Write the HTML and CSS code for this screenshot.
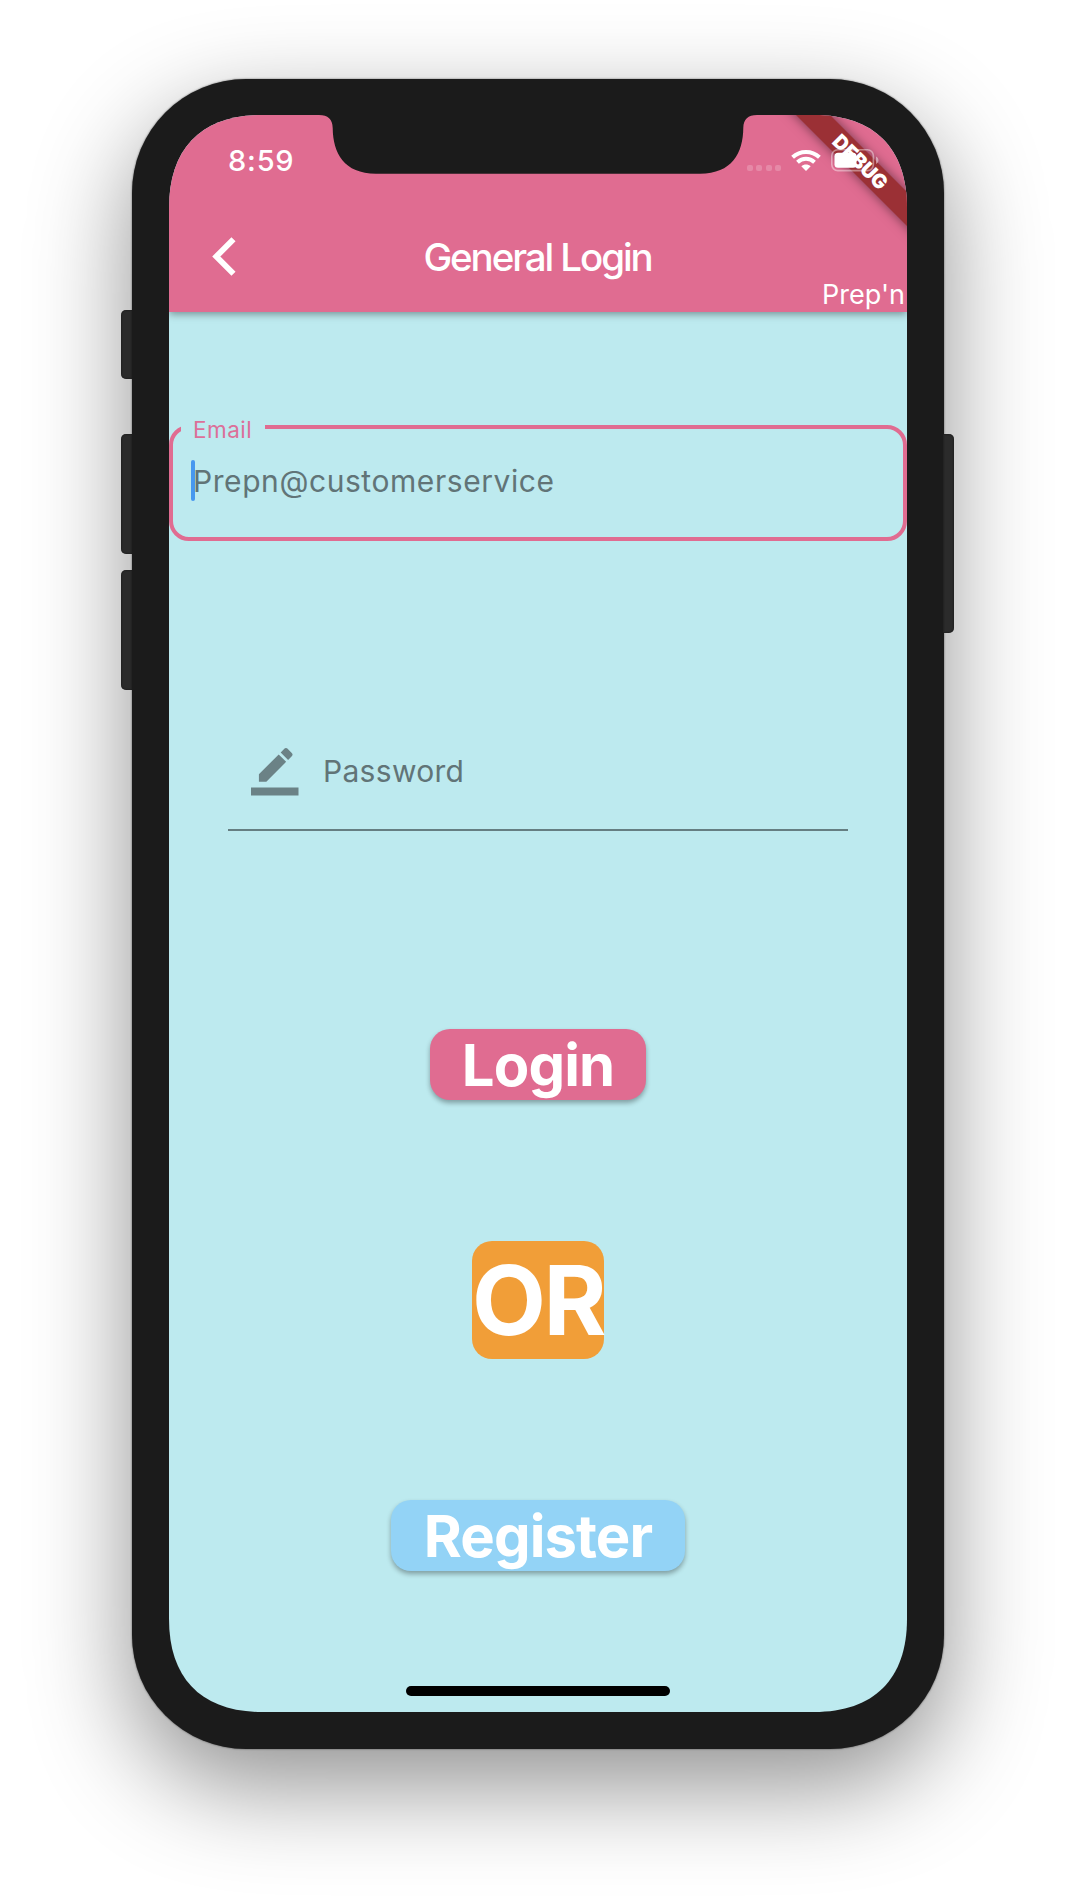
FILE: index.html
```html
<!DOCTYPE html>
<html lang="en">
<head>
<meta charset="utf-8">
<title>General Login</title>
<link rel="stylesheet" href="styles.css">
</head>
<body>
<main class="phone">
  <span class="key key-mute"></span>
  <span class="key key-up"></span>
  <span class="key key-down"></span>
  <span class="key key-power"></span>
  <div class="screen">
    <header class="header">
      <div class="status">
        <span class="time">8:59</span>
        <div class="indicators">
          <span class="dots"><i></i><i></i><i></i><i></i></span>
          <svg class="wifi" viewBox="0 0 30 22" width="30" height="22">
            <g fill="none" stroke="#fff" stroke-width="4">
              <path d="M1.6 8.3C9.2 1.1 20.8 1.1 28.4 8.3"/>
              <path d="M6.5 13.2C11.3 8.7 18.7 8.7 23.5 13.2"/>
            </g>
            <path fill="#fff" d="M10.3 17.2C13 14.9 17 14.9 19.7 17.2L15 22Z"/>
          </svg>
          <svg class="battery" viewBox="0 0 49 23" width="49" height="23">
            <rect x=".8" y=".8" width="41.6" height="20.8" rx="6" fill="none" stroke="#fff" stroke-opacity=".42" stroke-width="1.6"/>
            <rect x="3.5" y="3.7" width="22" height="15" rx="3.5" fill="#fff"/>
            <path d="M45 7.5C48.3 9 48.3 13.6 45 15Z" fill="#fff" fill-opacity=".45"/>
          </svg>
        </div>
      </div>
      <div class="toolbar">
        <svg class="back" viewBox="0 0 24 40" width="24" height="40"><path d="M21.5 2.3 4.3 19.5 21.5 36.7" fill="none" stroke="#fff" stroke-width="5.8"/></svg>
        <h1 class="title">General Login</h1>
        <span class="brand">Prep'n</span>
      </div>
    </header>
    <div class="email">
      <span class="email-label">Email</span>
      <span class="caret"></span><span class="hint">Prepn@customerservice</span>
    </div>
    <div class="password">
      <svg class="pencil" viewBox="0 0 24 24" width="47.5" height="47.5"><path d="M17.75 7 14 3.25l-10 10V17h3.75l10-10zm2.96-2.96c.39-.39.39-1.02 0-1.41L18.37.29c-.39-.39-1.02-.39-1.41 0L15 2.25 18.75 6l1.96-1.96zM0 20h24v4H0z"/></svg>
      <span class="password-text">Password</span>
    </div>
    <button class="btn login">Login</button>
    <div class="or"><span>OR</span></div>
    <button class="btn register">Register</button>
    <div class="home"></div>
    <div class="banner">DEBUG</div>
    <svg class="notch" viewBox="0 0 738 60" width="738" height="60"><path d="M150 0C159 0 163.5 4 163.7 13C164 38 175 58.7 207 58.7H531C563 58.7 574 38 574.3 13C574.5 4 579 0 588 0Z"/></svg>
  </div>
</main>
</body>
</html>
```
FILE: styles.css
```css
* { box-sizing: border-box; }
body {
  margin: 0;
  height: 1900px;
  padding-top: 79px;
  background: #fff;
  font-family: Inter, "Liberation Sans", sans-serif;
  overflow: hidden;
}
.phone {
  position: relative;
  width: 812px;
  height: 1670px;
  margin: 0 auto;
  padding: 36px 37px 37px;
  border-radius: 114px;
  background: #1b1b1b;
  box-shadow: 0 0 2px rgba(0,0,0,.6), 0 36px 100px rgba(0,0,0,.44);
}
.key { position: absolute; width: 11px; background: #2b2b2b; box-shadow: inset 0 0 2px #111; }
.key-mute, .key-up, .key-down { left: -11px; border-radius: 5px 0 0 5px; }
.key-mute { top: 231px; height: 69px; }
.key-up { top: 355px; height: 120px; }
.key-down { top: 491px; height: 120px; }
.key-power { right: -10px; top: 355px; height: 199px; border-radius: 0 5px 5px 0; }
.screen {
  position: relative;
  display: flex;
  flex-direction: column;
  align-items: center;
  height: 1597px;
  clip-path: path("M0 93C0 33 33 0 93 0H645C705 0 738 33 738 93V1504C738 1564 705 1597 645 1597H93C33 1597 0 1564 0 1504Z");
  overflow: hidden;
  background: #bdeaef;
}
.header {
  width: 100%;
  height: 197px;
  flex: none;
  background: #e06c91;
  box-shadow: 0 2px 8px rgba(0,0,0,.4);
}
.status {
  position: relative;
  z-index: 2;
  display: flex;
  justify-content: space-between;
  height: 87px;
  padding: 31px 26px 0 59px;
}
.time { color: #fff; font-size: 29px; line-height: 30px; font-weight: 500; letter-spacing: .8px; }
.indicators { display: flex; align-items: flex-start; padding-top: 3px; }
.dots { display: flex; gap: 3.4px; padding-top: 16px; margin-right: 10px; }
.dots i { width: 6px; height: 6px; border-radius: 2px; background: rgba(255,255,255,.2); }
.wifi { margin-right: 10px; }
.battery { margin-right: 1px; }
.toolbar {
  display: grid;
  grid-template-columns: 1fr auto 1fr;
  height: 110px;
}
.back { margin: 35px 0 0 43px; }
.title { margin: 31px 1px 0 0; color: #fff; font-size: 38.5px; line-height: 48px; font-weight: 500; letter-spacing: -2.1px; white-space: nowrap; }
.brand { align-self: end; justify-self: end; padding-right: 2px; color: #fff; font-size: 27px; line-height: 34px; }
.email {
  position: relative;
  display: flex;
  align-items: center;
  width: 738px;
  height: 116px;
  margin-top: 113px;
  padding: 0 18px 5px;
  border: 4px solid #e06c91;
  border-radius: 20px;
  flex: none;
}
.email-label {
  position: absolute;
  left: 8px;
  top: -12px;
  width: 84px;
  padding-left: 12px;
  background: #bdeaef;
  color: #dc7099;
  font-size: 22.5px;
  line-height: 26px;
  letter-spacing: .5px;
}
.caret { width: 4px; height: 41px; border-radius: 2px; background: #4798ef; }
.hint { margin-left: -2px; color: #617477; font-size: 30px; line-height: 36px; letter-spacing: .57px; }
.password {
  display: flex;
  width: 620px;
  height: 99px;
  margin-top: 191px;
  padding: 16px 23px 0;
  border-bottom: 2px solid #657e82;
  flex: none;
}
.pencil { fill: #6b8286; margin-right: 24.5px; }
.password-text { margin-top: 5px; color: #617477; font-size: 30px; line-height: 36px; letter-spacing: .3px; }
.btn {
  height: 71px;
  padding: 0;
  border: 0;
  border-radius: 20px;
  color: #fff;
  font: 700 58px/73px Inter, "Liberation Sans", sans-serif;
  letter-spacing: -.9px;
  box-shadow: 0 3px 5px rgba(0,0,0,.32);
  flex: none;
}
.login { width: 216px; margin-top: 198px; background: #e06c91; }
.or {
  display: flex;
  justify-content: center;
  align-items: center;
  width: 132px;
  height: 118px;
  margin-top: 141px;
  border-radius: 20px;
  background: #f19e38;
  color: #fff;
  font-size: 96px;
  line-height: 118px;
  font-weight: 700;
  letter-spacing: -2.6px;
  flex: none;
}
.register { width: 294px; margin-top: 141px; background: #93d3f6; }
.home { width: 264px; height: 10px; margin-top: 115px; border-radius: 5px; background: #000; flex: none; }
.banner {
  position: absolute;
  left: 540.5px;
  top: 34.5px;
  width: 300px;
  height: 24px;
  transform: rotate(45deg);
  background: #9b3035;
  box-shadow: 0 0 12px rgba(0,0,0,.5);
  color: #fff;
  font-size: 20px;
  line-height: 24px;
  font-weight: 900;
  text-align: center;
  letter-spacing: -.3px;
}
.notch { position: absolute; left: 0; top: 0; fill: #1b1b1b; }
```
